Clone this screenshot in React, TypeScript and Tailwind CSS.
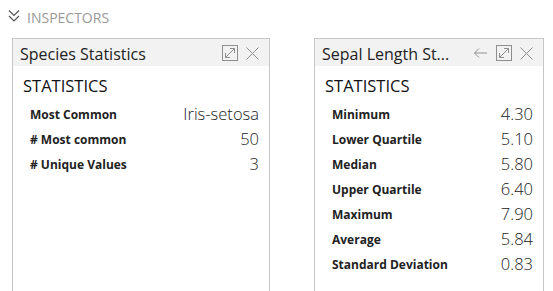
const font = { fontFamily: '"Open Sans", "Noto Sans", sans-serif' };

type Row = [string, string];

const species: Row[] = [
  ["Most Common", "Iris-setosa"],
  ["# Most common", "50"],
  ["# Unique Values", "3"],
];

const sepal: Row[] = [
  ["Minimum", "4.30"],
  ["Lower Quartile", "5.10"],
  ["Median", "5.80"],
  ["Upper Quartile", "6.40"],
  ["Maximum", "7.90"],
  ["Average", "5.84"],
  ["Standard Deviation", "0.83"],
];

function MaximizeIcon() {
  return (
    <svg width="16" height="16" viewBox="0 0 16 16" fill="none" stroke="#8f8f8f" strokeWidth="1">
      <rect x="0.5" y="0.5" width="15" height="15" />
      <path d="M3.5 12.5 L12.5 3.5 M8 3.5 H12.5 V8 M3.5 8 V12.5 H8" />
    </svg>
  );
}

function CloseIcon() {
  return (
    <svg width="13" height="13" viewBox="0 0 13 13" fill="none" stroke="#8f8f8f" strokeWidth="1">
      <path d="M0.5 0.5 L12.5 12.5 M12.5 0.5 L0.5 12.5" />
    </svg>
  );
}

function BackIcon() {
  return (
    <svg width="15" height="12" viewBox="0 0 15 12" fill="none" stroke="#8f8f8f" strokeWidth="1">
      <path d="M14 6 H1.5 M6 1.5 L1.5 6 L6 10.5" />
    </svg>
  );
}

function Panel({ title, rows, width, back }: { title: string; rows: Row[]; width: string; back?: boolean }) {
  return (
    <div className={`${width} h-[260px] shrink-0 border border-[#c6c6c6] bg-white`}>
      <div className="flex h-[27px] items-center bg-[#f2f2f2] pl-[7px] pr-[10px]">
        <span className="truncate pt-[2px] text-[16px] text-[#222]">{title}</span>
        <div className="ml-auto flex items-center gap-[8px] pl-2 pt-[1px]">
          {back && <BackIcon />}
          <MaximizeIcon />
          <CloseIcon />
        </div>
      </div>
      <div className="pl-[10px] pr-[10px] pt-[9px]">
        <div className="text-[16.5px] leading-[22px] text-[#111]">STATISTICS</div>
        <div className="mt-[5px]">
          {rows.map(([k, v]) => (
            <div key={k} className="flex h-[25px] items-center pl-[7px]">
              <span className="text-[12px] font-bold text-[#222]">{k}</span>
              <span className="ml-auto text-[16.5px] font-light text-[#222]">{v}</span>
            </div>
          ))}
        </div>
      </div>
    </div>
  );
}

export default function App() {
  return (
    <div className="h-[291px] w-[553px] overflow-hidden bg-white" style={font}>
      <div className="flex h-[38px] items-start pl-[8px] pt-[9px]">
        <svg width="12" height="14" viewBox="0 0 12 14" fill="none" stroke="#555" strokeWidth="1.2" className="mt-[0px]">
          <path d="M1 1.5 L6 6.5 L11 1.5 M1 7 L6 12 L11 7" />
        </svg>
        <span className="ml-[7px] text-[14px] leading-[17px] text-[#999]">INSPECTORS</span>
      </div>
      <div className="flex gap-[44px] pl-[12px]">
        <Panel title="Species Statistics" rows={species} width="w-[258px]" />
        <Panel title="Sepal Length St..." rows={sepal} width="w-[230px]" back />
      </div>
    </div>
  );
}
